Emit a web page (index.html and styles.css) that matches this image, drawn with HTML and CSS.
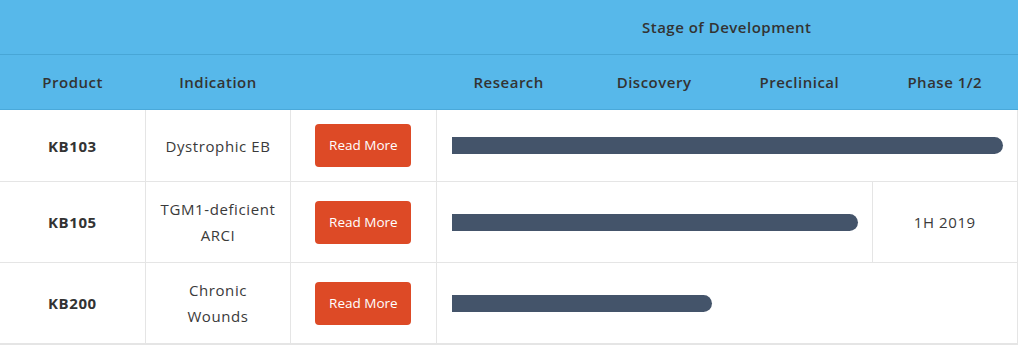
FILE: index.html
```html
<!DOCTYPE html>
<html>
<head>
<meta charset="utf-8">
<link rel="stylesheet" href="styles.css">
</head>
<body>
<table class="pipeline">
  <colgroup>
    <col><col><col><col><col><col><col>
  </colgroup>
  <thead>
    <tr class="head-top">
      <th colspan="3"></th>
      <th colspan="4">Stage of Development</th>
    </tr>
    <tr class="head-cols">
      <th>Product</th>
      <th>Indication</th>
      <th></th>
      <th>Research</th>
      <th>Discovery</th>
      <th>Preclinical</th>
      <th>Phase 1/2</th>
    </tr>
  </thead>
  <tbody>
    <tr class="r1">
      <td class="product">KB103</td>
      <td class="indication">Dystrophic EB</td>
      <td class="action"><a class="btn" href="#">Read More</a></td>
      <td class="stage" colspan="4"><div class="bar" style="width:100%"></div></td>
    </tr>
    <tr class="r2">
      <td class="product">KB105</td>
      <td class="indication">TGM1-deficient<br>ARCI</td>
      <td class="action"><a class="btn" href="#">Read More</a></td>
      <td class="stage" colspan="3"><div class="bar" style="width:100%"></div></td>
      <td class="note">1H 2019</td>
    </tr>
    <tr class="r3">
      <td class="product">KB200</td>
      <td class="indication">Chronic<br>Wounds</td>
      <td class="action"><a class="btn" href="#">Read More</a></td>
      <td class="stage" colspan="4"><div class="bar" style="width:47.2%"></div></td>
    </tr>
  </tbody>
</table>
</body>
</html>
```

FILE: styles.css
```css
html, body {
  margin: 0;
  padding: 0;
  background: #ffffff;
}

body {
  font-family: "Open Sans", "Liberation Sans", sans-serif;
  color: #333333;
}

.pipeline {
  width: 1018px;
  table-layout: fixed;
  border-collapse: collapse;
  border-spacing: 0;
}

.pipeline th {
  background: #57b8ea;
  color: #333333;
  font-size: 15px;
  font-weight: 600;
  letter-spacing: 0.5px;
  text-align: center;
  padding: 0;
}

.head-top th {
  height: 54px;
  border-bottom: 1px solid #48a6d6;
}

.head-cols th {
  height: 54px;
  border-bottom: 1px solid #4aa9da;
}

.pipeline td {
  border: 1px solid #e5e5e5;
  text-align: center;
  vertical-align: middle;
  padding: 14px 0;
  font-size: 15px;
  line-height: 26px;
  letter-spacing: 0.6px;
}

.pipeline tr td:first-child {
  border-left: none;
}

.pipeline .r1 td {
  border-top: none;
  height: 43px;
}

.pipeline .r2 td,
.pipeline .r3 td {
  height: 52px;
  padding: 14px 0;
}

.pipeline .r3 td {
  border-bottom: 2px solid #e5e5e5;
}

.product {
  font-weight: 700;
  font-size: 15px;
  letter-spacing: 0.3px;
  color: #333333;
}

.indication {
  color: #3a3a3a;
}

.btn {
  display: inline-block;
  width: 96px;
  height: 43px;
  line-height: 43px;
  background: #dd4a26;
  color: #ffffff;
  border-radius: 4px;
  font-size: 13.5px;
  letter-spacing: 0;
  text-decoration: none;
}

.pipeline td.stage {
  text-align: left;
  padding-left: 15px;
  padding-right: 14px;
}

.bar {
  height: 17px;
  background: #44546a;
  border-radius: 0 9px 9px 0;
}

.note {
  color: #3a3a3a;
}
```
